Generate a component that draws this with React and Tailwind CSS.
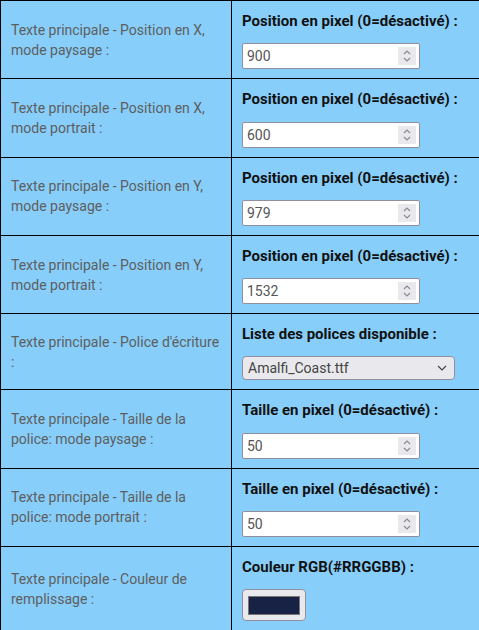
import React from "react";

const rows = [
  { left: "Texte principale - Position en X, mode paysage :", label: "Position en pixel (0=désactivé) :", type: "num", value: "900" },
  { left: "Texte principale - Position en X, mode portrait :", label: "Position en pixel (0=désactivé) :", type: "num", value: "600" },
  { left: "Texte principale - Position en Y, mode paysage :", label: "Position en pixel (0=désactivé) :", type: "num", value: "979" },
  { left: "Texte principale - Position en Y, mode portrait :", label: "Position en pixel (0=désactivé) :", type: "num", value: "1532" },
  { left: "Texte principale - Police d'écriture :", label: "Liste des polices disponible :", type: "select", value: "Amalfi_Coast.ttf" },
  { left: "Texte principale - Taille de la police: mode paysage :", label: "Taille en pixel (0=désactivé) :", type: "num", value: "50" },
  { left: "Texte principale - Taille de la police: mode portrait :", label: "Taille en pixel (0=désactivé) :", type: "num", value: "50" },
  { left: "Texte principale - Couleur de remplissage :", label: "Couleur RGB(#RRGGBB) :", type: "color", value: "#172244" },
];

function NumInput({ value }) {
  return (
    <div className="flex items-center w-[178px] h-[26px] bg-white border border-[#8f8f9d] rounded-[2px] pl-[4px] pr-[3px]">
      <span className="flex-1 text-[14px] text-[#555] leading-none">{value}</span>
      <span className="flex items-center justify-center w-[18px] h-[18px] bg-[#e9e9ed]">
        <svg width="10" height="14" viewBox="0 0 10 14" fill="none" stroke="#8a8a92" strokeWidth="1.2">
          <path d="M2 5 L5 2 L8 5" />
          <path d="M2 9 L5 12 L8 9" />
        </svg>
      </span>
    </div>
  );
}

function SelectInput({ value }) {
  return (
    <div className="flex items-center w-[213px] h-[24px] bg-[#e9e9ed] border border-[#8f8f9d] rounded-[4px] pl-[5px] pr-[7px]">
      <span className="flex-1 text-[14px] text-[#444] leading-none">{value}</span>
      <svg width="10" height="6" viewBox="0 0 10 6" fill="none" stroke="#444" strokeWidth="1.2">
        <path d="M1 1 L5 5 L9 1" />
      </svg>
    </div>
  );
}

function ColorInput({ value }) {
  return (
    <div className="flex items-center justify-center w-[64px] h-[32px] bg-[#e9e9ed] border border-[#8f8f9d] rounded-[4px]">
      <div className="w-[52px] h-[19px] border border-[#777]" style={{ backgroundColor: value }} />
    </div>
  );
}

export default function App() {
  return (
    <div className="w-[479px] overflow-hidden bg-[#87cefa]" style={{ fontFamily: "Roboto, 'Liberation Sans', sans-serif" }}>
      <table className="w-[490px] border-collapse">
        <tbody>
          {rows.map((r, i) => (
            <tr key={i}>
              <td className="w-[231px] border border-black px-[10px] align-middle text-[14px] leading-[20px] text-[#5e5e5e]">
                {r.left}
              </td>
              <td className="border border-black px-[10px] pt-[11px] pb-[9px] align-top">
                <div className="text-[15px] font-bold text-[#111] leading-[18px] mb-[13.3px]">{r.label}</div>
                {r.type === "num" && <NumInput value={r.value} />}
                {r.type === "select" && <SelectInput value={r.value} />}
                {r.type === "color" && <ColorInput value={r.value} />}
              </td>
            </tr>
          ))}
        </tbody>
      </table>
    </div>
  );
}
